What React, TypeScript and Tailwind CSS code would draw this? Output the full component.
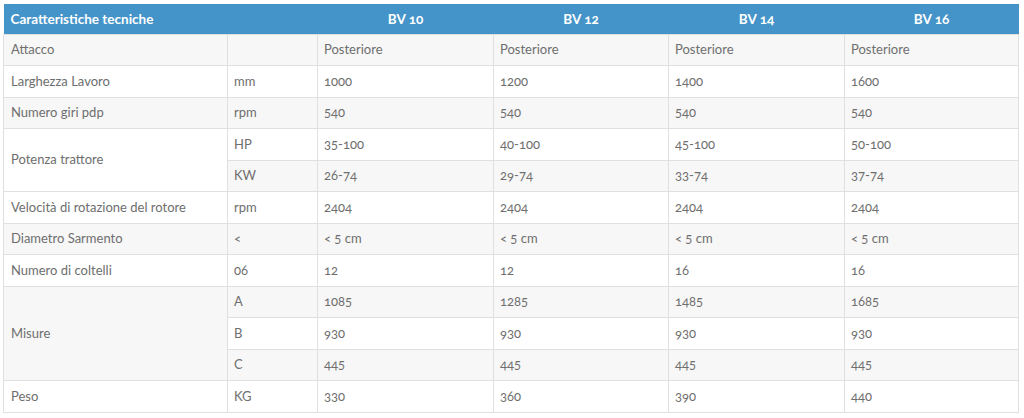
import React from "react";

type Row = { label?: string; rowSpan?: number; unit: string; vals: string[] };

const rows: Row[] = [
  { label: "Attacco", unit: "", vals: ["Posteriore", "Posteriore", "Posteriore", "Posteriore"] },
  { label: "Larghezza Lavoro", unit: "mm", vals: ["1000", "1200", "1400", "1600"] },
  { label: "Numero giri pdp", unit: "rpm", vals: ["540", "540", "540", "540"] },
  { label: "Potenza trattore", rowSpan: 2, unit: "HP", vals: ["35-100", "40-100", "45-100", "50-100"] },
  { unit: "KW", vals: ["26-74", "29-74", "33-74", "37-74"] },
  { label: "Velocità di rotazione del rotore", unit: "rpm", vals: ["2404", "2404", "2404", "2404"] },
  { label: "Diametro Sarmento", unit: "<", vals: ["< 5 cm", "< 5 cm", "< 5 cm", "< 5 cm"] },
  { label: "Numero di coltelli", unit: "06", vals: ["12", "12", "16", "16"] },
  { label: "Misure", rowSpan: 3, unit: "A", vals: ["1085", "1285", "1485", "1685"] },
  { unit: "B", vals: ["930", "930", "930", "930"] },
  { unit: "C", vals: ["445", "445", "445", "445"] },
  { label: "Peso", unit: "KG", vals: ["330", "360", "390", "440"] },
];

export default function App() {
  return (
    <div className="bg-white w-[1024px] h-[418px] pt-[4px] pl-[3px] overflow-hidden">
      <table
        className="border-collapse table-fixed w-[1015px] text-[13px] text-[#6e6e6e] oldstyle-nums"
        style={{ fontFamily: "Lato, 'Open Sans', sans-serif" }}
      >
        <colgroup>
          <col className="w-[224px]" />
          <col className="w-[90px]" />
          <col className="w-[176px]" />
          <col className="w-[175px]" />
          <col className="w-[176px]" />
          <col className="w-[174px]" />
        </colgroup>
        <thead>
          <tr className="bg-[#4494c9] h-[30px] text-white">
            <th colSpan={2} className="text-left font-bold pl-[7px] text-[13.5px]">
              Caratteristiche tecniche
            </th>
            <th className="font-bold text-center text-[13.5px]">BV 10</th>
            <th className="font-bold text-center text-[13.5px]">BV 12</th>
            <th className="font-bold text-center text-[13.5px]">BV 14</th>
            <th className="font-bold text-center text-[13.5px]">BV 16</th>
          </tr>
        </thead>
        <tbody>
          {rows.map((r, i) => (
            <tr key={i} className={`h-[31.5px] ${i % 2 === 0 ? "bg-[#f7f7f7]" : "bg-white"}`}>
              {r.label !== undefined && (
                <td rowSpan={r.rowSpan} className="border border-[#e0e0e0] pl-[7px] align-middle">
                  {r.label}
                </td>
              )}
              <td className="border border-[#e0e0e0] pl-[6px]">{r.unit}</td>
              {r.vals.map((v, j) => (
                <td key={j} className="border border-[#e0e0e0] pl-[6px]">
                  {v}
                </td>
              ))}
            </tr>
          ))}
        </tbody>
      </table>
    </div>
  );
}
